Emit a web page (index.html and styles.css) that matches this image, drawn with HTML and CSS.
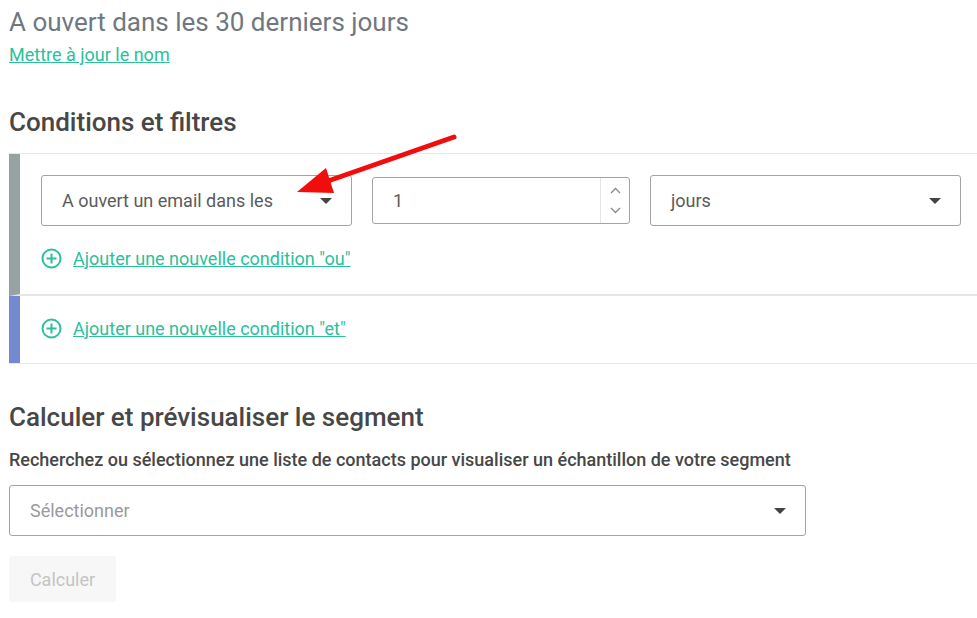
FILE: index.html
```html
<!DOCTYPE html>
<html lang="fr">

<head>
	<meta charset="UTF-8">
	<meta name="viewport" content="width=device-width, initial-scale=1.0">
	<title>Segment</title>
	<link rel="stylesheet" href="styles.css">
</head>

<body>
	<div class="page">
		<h1 class="title">A ouvert dans les 30 derniers jours</h1>
		<a class="link name-link" href="#">Mettre à jour le nom</a>

		<h2 class="section-title">Conditions et filtres</h2>
		<div class="conditions">
			<div class="group group-or">
				<div class="row">
					<div class="select select-cond">
						<span>A ouvert un email dans les</span>
						<i class="caret"></i>
					</div>
					<div class="number">
						<span class="number-value">1</span>
						<div class="spinner">
							<svg width="11" height="7" viewBox="0 0 11 7"><path d="M1 6 L5.5 1.5 L10 6" fill="none" stroke="#8a8a8a" stroke-width="1.3"/></svg>
							<svg width="11" height="7" viewBox="0 0 11 7"><path d="M1 1 L5.5 5.5 L10 1" fill="none" stroke="#8a8a8a" stroke-width="1.3"/></svg>
						</div>
					</div>
					<div class="select select-unit">
						<span>jours</span>
						<i class="caret"></i>
					</div>
				</div>
				<a class="add" href="#">
					<svg class="plus" width="21" height="21" viewBox="0 0 21 21"><circle cx="10.5" cy="10.5" r="9" fill="none" stroke="#2bbf9b" stroke-width="2"/><path d="M10.5 5.5 V15.5 M5.5 10.5 H15.5" stroke="#2bbf9b" stroke-width="2"/></svg>
					<span class="link">Ajouter une nouvelle condition "ou"</span>
				</a>
			</div>
			<div class="group group-and">
				<a class="add" href="#">
					<svg class="plus" width="21" height="21" viewBox="0 0 21 21"><circle cx="10.5" cy="10.5" r="9" fill="none" stroke="#2bbf9b" stroke-width="2"/><path d="M10.5 5.5 V15.5 M5.5 10.5 H15.5" stroke="#2bbf9b" stroke-width="2"/></svg>
					<span class="link">Ajouter une nouvelle condition "et"</span>
				</a>
			</div>
		</div>

		<h2 class="section-title preview-title">Calculer et prévisualiser le segment</h2>
		<p class="hint">Recherchez ou sélectionnez une liste de contacts pour visualiser un échantillon de votre segment</p>
		<div class="select select-list">
			<span class="placeholder">Sélectionner</span>
			<i class="caret"></i>
		</div>
		<button class="btn" disabled>Calculer</button>
	</div>

	<!-- flèche d'annotation -->
	<svg class="arrow" width="200" height="95" viewBox="0 0 200 95">
		<path d="M182 7 L56 51" stroke="#f20d0d" stroke-width="5" stroke-linecap="round"/>
		<path d="M25 62 L54 38 L62 63 Z" fill="#f20d0d"/>
	</svg>
</body>

</html>
```

FILE: styles.css
```css
* {
	margin: 0;
	padding: 0;
	box-sizing: border-box;
}

body {
	font-family: Roboto, "Liberation Sans", sans-serif;
	background-color: #fff;
	color: #474747;
	overflow: hidden;
}

.page {
	padding: 6px 0 0 9px;
	width: 1000px;
}

.title {
	font-size: 26px;
	font-weight: 400;
	color: #6f7880;
	line-height: 32px;
}

.link {
	color: #2bbf9b;
	text-decoration: underline;
	font-size: 18px;
}

.name-link {
	display: inline-block;
	margin-top: 6px;
	line-height: 22px;
}

.section-title {
	font-size: 26px;
	font-weight: 500;
	color: #474747;
	line-height: 32px;
	margin-top: 40px;
}

.conditions {
	margin-top: 15px;
	border-top: 1px solid #e8e8e8;
	border-bottom: 1px solid #e8e8e8;
}

.group {
	border-left: 11px solid #95a3a2;
	padding-left: 21px;
}

.group-or {
	padding-top: 21px;
	height: 142px;
	border-bottom: 2px solid #e6e6e6;
}

.group-and {
	border-left-color: #7489cf;
	height: 67px;
	padding-top: 22px;
}

.row {
	display: flex;
	align-items: center;
	gap: 20px;
}

.select {
	display: flex;
	align-items: center;
	justify-content: space-between;
	border: 1px solid #a3a3a3;
	border-radius: 3px;
	height: 51px;
	padding: 0 19px 0 20px;
	font-size: 18px;
	color: #5b5b5b;
}

.select-cond {
	width: 311px;
}

.select-unit {
	width: 311px;
}

.caret {
	width: 0;
	height: 0;
	border-left: 6px solid transparent;
	border-right: 6px solid transparent;
	border-top: 6px solid #444;
}

.number {
	display: flex;
	width: 258px;
	height: 47px;
	border: 1px solid #a3a3a3;
	border-radius: 3px;
	font-size: 18px;
	color: #5b5b5b;
}

.number-value {
	flex: 1;
	display: flex;
	align-items: center;
	padding-left: 20px;
}

.spinner {
	width: 29px;
	border-left: 1px solid #e4e4e4;
	display: flex;
	flex-direction: column;
	align-items: center;
	justify-content: center;
	gap: 13px;
}

.add {
	display: flex;
	align-items: center;
	gap: 11px;
	margin-top: 22px;
	text-decoration: none;
}

.group-and .add {
	margin-top: 0;
}

.preview-title {
	margin-top: 37px;
}

.hint {
	font-size: 18px;
	font-weight: 500;
	color: #474747;
	margin-top: 16px;
	line-height: 22px;
}

.select-list {
	width: 797px;
	height: 51px;
	margin-top: 14px;
}

.placeholder {
	color: #9a9a9a;
}

.btn {
	display: block;
	margin-top: 20px;
	width: 107px;
	height: 46px;
	border: none;
	border-radius: 3px;
	background-color: #f7f7f7;
	color: #c4c4c4;
	font-family: inherit;
	font-size: 18px;
}

.arrow {
	position: absolute;
	left: 272px;
	top: 130px;
}
```
